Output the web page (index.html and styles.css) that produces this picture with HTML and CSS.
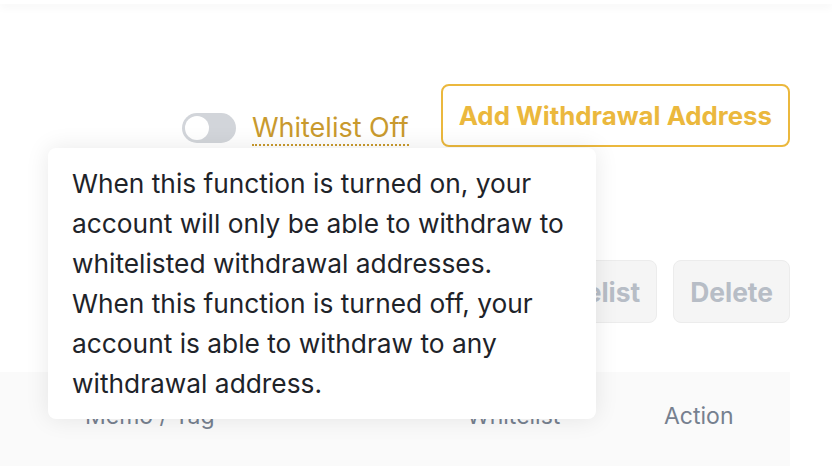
FILE: index.html
```html
<!DOCTYPE html>
<html lang="en">
<head>
    <meta charset="UTF-8">
    <meta name="viewport" content="width=device-width, initial-scale=1.0">
    <title>Withdrawal Address Management</title>
    <link rel="stylesheet" href="styles.css">
</head>
<body>
    <div class="topbar"></div>

    <div class="page">
        <div class="toolbar">
            <span class="switch"><span class="knob"></span></span>
            <span class="switch-label">Whitelist Off</span>
            <button class="btn-outline">Add Withdrawal Address</button>
        </div>

        <div class="bulk-actions">
            <button class="btn-muted">Remove from Whitelist</button>
            <button class="btn-muted">Delete</button>
        </div>

        <div class="table-head">
            <span class="col-memo">Memo / Tag</span>
            <span class="col-white">Whitelist</span>
            <span class="col-action">Action</span>
        </div>

        <!-- tooltip shown under the whitelist switch -->
        <div class="tooltip">
            <p>When this function is turned on, your account will only be able to withdraw to whitelisted withdrawal addresses.</p>
            <p>When this function is turned off, your account is able to withdraw to any withdrawal address.</p>
        </div>
    </div>
</body>
</html>
```

FILE: styles.css
```css
body {
    margin: 0;
    background-color: #fff;
    font-family: 'Inter', 'Noto Sans', sans-serif;
    color: #1e2329;
    overflow: hidden;
}

.topbar {
    height: 4px;
    background-color: #fff;
    box-shadow: 0 2px 10px rgba(0, 0, 0, 0.07);
}

.page {
    position: relative;
    padding: 80px 42px 0 0;
}

.toolbar {
    display: flex;
    justify-content: flex-end;
    align-items: flex-end;
}

.switch {
    width: 54px;
    height: 30px;
    border-radius: 15px;
    background-color: #d2d5da;
    display: flex;
    align-items: center;
    padding: 0 3px;
    box-sizing: border-box;
    margin: 0 16px 4px 0;
}

.knob {
    width: 24px;
    height: 24px;
    border-radius: 50%;
    background-color: #fff;
}

.switch-label {
    color: #c99a2e;
    font-size: 27px;
    line-height: 32px;
    border-bottom: 2px dotted #c99a2e;
    margin-bottom: 1px;
}

.btn-outline {
    margin-left: 32px;
    height: 63px;
    padding: 0 16px;
    border: 2px solid #ebb83d;
    border-radius: 8px;
    background-color: #fff;
    color: #ebb83d;
    font-family: inherit;
    font-size: 25.8px;
    font-weight: 700;
}

.bulk-actions {
    display: flex;
    justify-content: flex-end;
    gap: 16px;
    margin-top: 113px;
}

.btn-muted {
    height: 63px;
    padding: 0 16px;
    border: 1px solid #ececec;
    border-radius: 8px;
    background-color: #f5f5f5;
    color: #b7bdc6;
    font-family: inherit;
    font-size: 26.4px;
    font-weight: 700;
}

.table-head {
    margin-top: 49px;
    height: 100px;
    background-color: #fafafa;
    display: grid;
    grid-template-columns: 467px 197px auto;
    color: #76808f;
    font-size: 23px;
    line-height: 88px;
}

.col-memo {
    padding-left: 85px;
}

.tooltip {
    position: absolute;
    left: 48px;
    top: 144px;
    width: 548px;
    box-sizing: border-box;
    padding: 16px 24px 15px;
    background-color: #fff;
    border-radius: 8px;
    box-shadow: 0 0 24px rgba(0, 0, 0, 0.09);
    font-size: 26.3px;
    line-height: 40px;
    color: #1e2329;
}

.tooltip p {
    margin: 0;
}
```
